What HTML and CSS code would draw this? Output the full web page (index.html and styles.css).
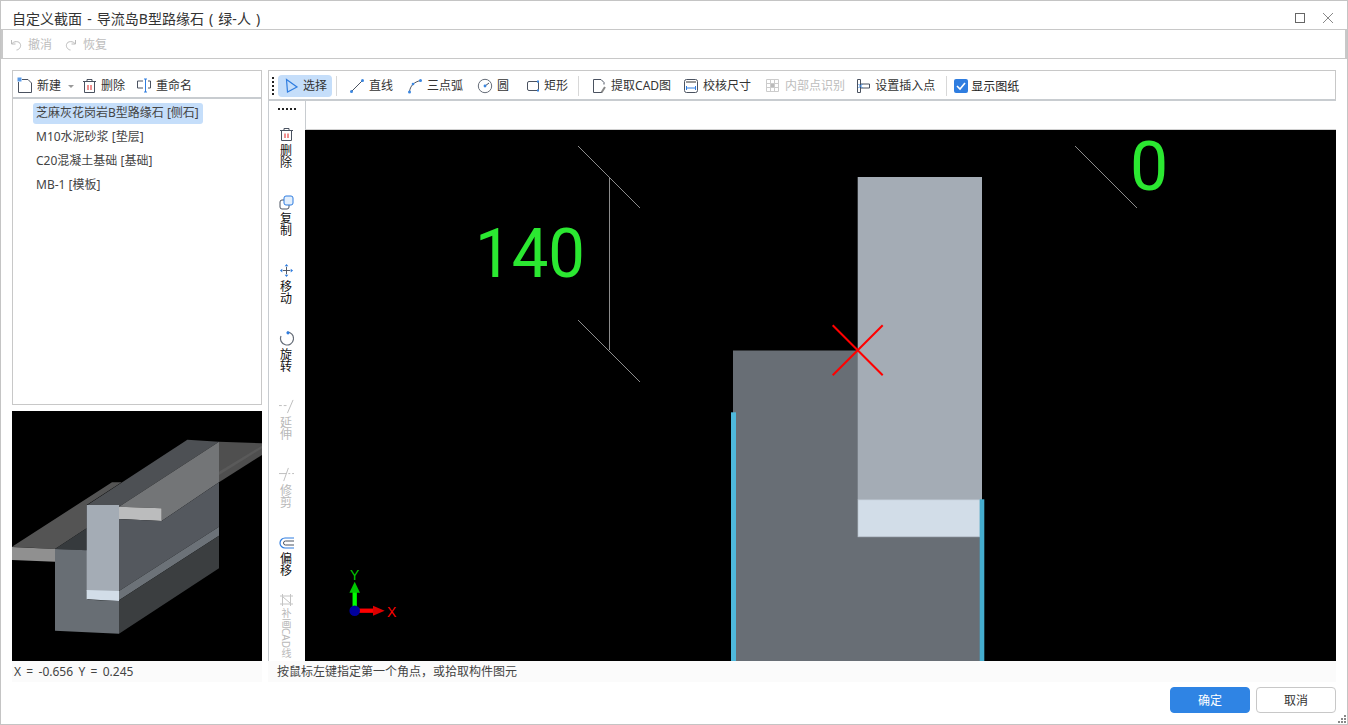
FILE: index.html
```html
<!DOCTYPE html>
<html lang="zh-CN">
<head>
<meta charset="utf-8">
<title>自定义截面</title>
<link rel="stylesheet" href="styles.css">
</head>
<body>
<div class="window">
  <header class="titlebar">
    <span class="title">自定义截面 - 导流岛B型路缘石 ( 绿-人 )</span>
    <div class="winbtns">
      <svg width="12" height="12" viewBox="0 0 12 12"><rect x="1.500" y="1.500" width="9" height="9" fill="none" stroke="#666"/></svg>
      <svg width="12" height="12" viewBox="0 0 12 12"><path d="M1 1l10 10M11 1L1 11" stroke="#888" fill="none"/></svg>
    </div>
  </header>
  <div class="undobar">
    <span class="tool off"><svg width="14" height="14" viewBox="0 0 14 14"><path d="M2.500 2v4h4M2.500 6c2-3 8-3.500 9 .5.700 3-2 5.500-4 5.500" fill="none" stroke="#bbb"/></svg>撤消</span>
    <span class="tool off"><svg width="14" height="14" viewBox="0 0 14 14"><path d="M11.500 2v4h-4M11.500 6c-2-3-8-3.500-9 .5-.7 3 2 5.500 4 5.500" fill="none" stroke="#bbb"/></svg>恢复</span>
  </div>
  <main class="main">
    <aside class="left">
      <section class="treepanel">
        <div class="treebar">
          <span class="tool"><svg width="16" height="17" viewBox="0 0 16 17"><path d="M5 2.500h6l3.500 3.500v9.500h-13V5" fill="none" stroke="#4a5260"/><rect x="0.500" y="0.500" width="4" height="4" fill="#5a9ae6"/></svg>新建</span>
          <i class="caret"></i>
          <span class="tool"><svg width="15" height="16" viewBox="0 0 15 16"><path d="M1 3.500h13M5 3V1.500h5V3M2.500 3.500v11h10v-11" fill="none" stroke="#4a5260"/><path d="M6 7v5M9 7v5" stroke="#e02020"/></svg>删除</span>
          <span class="tool"><svg width="16" height="15" viewBox="0 0 16 15"><path d="M7 3H1.500v7H7M12 3h2.500v7H12" fill="none" stroke="#4a5260"/><path d="M8 1h3M9.500 1v13M8 14h3" fill="none" stroke="#2f7de0"/></svg>重命名</span>
        </div>
        <ul class="tree">
          <li><span class="node sel">芝麻灰花岗岩B型路缘石 [侧石]</span></li>
          <li><span class="node">M10水泥砂浆 [垫层]</span></li>
          <li><span class="node">C20混凝土基础 [基础]</span></li>
          <li><span class="node">MB-1 [模板]</span></li>
        </ul>
      </section>
      <svg class="preview" width="250" height="250" viewBox="36 18 750 750">
        <rect x="36" y="18" width="750" height="750" fill="#000"/>
        <polygon points="36,425 336,232 365,232 260,300 260,370 165,432" fill="#545454"/>
        <polygon points="165,432 260,370 260,436" fill="#363a3d"/>
        <polygon points="262,300 562,104 657,110 357,305" fill="#4d5054"/>
        <polygon points="657,110 786,115 786,150 657,232" fill="#4f4f4f"/>
        <polygon points="657,200 786,122 786,130 657,210" fill="#5a5a5a"/>
        <polygon points="357,305 657,110 657,232 485,348 485,310" fill="#737577"/>
        <polygon points="357,305 485,310 485,348 357,342" fill="#bbbcbd"/>
        <polygon points="357,342 485,348 657,232 657,365 357,558" fill="#54585e"/>
        <polygon points="357,558 657,365 657,392 357,586" fill="#6c7278"/>
        <polygon points="357,586 657,392 657,490 357,686" fill="#3b3e40"/>
        <polygon points="165,432 262,436 262,584 357,588 357,686 165,677" fill="#686e74"/>
        <rect x="260" y="300" width="97" height="258" fill="#a4acb5"/>
        <polygon points="260,555 357,558 357,588 260,583" fill="#d2dde8"/>
        <polygon points="36,426 165,432 165,470 36,465" fill="#909090"/>
      </svg>
      <div class="coords">X = -0.656 Y = 0.245</div>
    </aside>
    <section class="work">
      <div class="topbar">
        <span class="grip"></span>
        <span class="tool btn active"><svg width="16" height="16" viewBox="0 0 16 16"><path d="M3.500 1.500L14 9 4.500 14z" fill="none" stroke="#2f7de0" stroke-width="1.200"/></svg>选择</span>
        <i class="sep"></i>
        <span class="tool btn"><svg width="16" height="16" viewBox="0 0 16 16"><path d="M2.500 13.500l11-11" stroke="#4a5260"/><circle cx="2.500" cy="13.500" r="1.500" fill="#3a86e0"/><circle cx="13.500" cy="2.500" r="1.500" fill="#3a86e0"/></svg>直线</span>
        <span class="tool btn"><svg width="16" height="16" viewBox="0 0 16 16"><path d="M2.500 14C3 8 7 4 13.500 2.500" fill="none" stroke="#4a5260"/><circle cx="2.500" cy="14" r="1.500" fill="#3a86e0"/><circle cx="6" cy="6" r="1.300" fill="#3a86e0"/><circle cx="13.500" cy="2.500" r="1.500" fill="#3a86e0"/></svg>三点弧</span>
        <span class="tool btn wide"><svg width="16" height="16" viewBox="0 0 16 16"><circle cx="8" cy="8" r="6.700" fill="none" stroke="#666d78"/><path d="M8 8l4-3" stroke="#4a5260"/><circle cx="8" cy="8" r="1.400" fill="#3a86e0"/></svg>圆</span>
        <span class="tool btn narrow"><svg width="14" height="14" viewBox="0 0 14 14"><rect x="1.500" y="2.500" width="11" height="9" rx="1.500" fill="none" stroke="#4a5260"/><rect x="11" y="1.500" width="2" height="2" fill="#3a86e0"/><rect x="11" y="10.500" width="2" height="2" fill="#3a86e0"/></svg>矩形</span>
        <i class="sep"></i>
        <span class="tool btn mid"><svg width="16" height="16" viewBox="0 0 16 16"><path d="M11 14.500H2.500v-13H10l3 3v2" fill="none" stroke="#4a5260"/><path d="M10.500 14.500L14 9" stroke="#888" stroke-width="2"/></svg>提取CAD图</span>
        <span class="tool btn"><svg width="16" height="16" viewBox="0 0 16 16"><rect x="1.500" y="1.500" width="13" height="13" rx="2" fill="none" stroke="#4a5260"/><path d="M3 4h10" stroke="#999" stroke-width="2"/><path d="M3 10h10M3.500 8v4M12.500 8v4" stroke="#2f7de0"/></svg>校核尺寸</span>
        <span class="tool btn off slim"><svg width="16" height="16" viewBox="0 0 16 16"><path d="M1.500 1.500h12v12h-12zM5.500 1.500v12M9.500 1.500v12M1.500 5.500h12M1.500 9.500h12" fill="none" stroke="#ccc"/><rect x="6" y="6" width="3" height="3" fill="#bbb"/></svg>内部点识别</span>
        <span class="tool btn"><svg width="15" height="16" viewBox="0 0 15 16"><path d="M1.500 1.500h3v13h-3zM4.500 6h9v4h-9" fill="none" stroke="#4a5260"/><path d="M2.500 6l4 4M6.500 6l-4 4" stroke="#3a86e0"/></svg>设置插入点</span>
        <i class="sep"></i>
        <label class="check"><svg width="14" height="14" viewBox="0 0 14 14"><rect width="14" height="14" rx="2" fill="#2f7de0"/><path d="M3 7l3 3 5-6" fill="none" stroke="#fff" stroke-width="1.600"/></svg>显示图纸</label>
      </div>
      <div class="stage">
        <nav class="sidebar">
          <span class="hgrip"></span>
          <div class="vtool"><svg width="15" height="15" viewBox="0 0 15 15"><path d="M1 3.500h13M5 3V1.500h5V3M2.500 3.500v10h10v-10" fill="none" stroke="#4a5260"/><path d="M6 6.500v4.500M9 6.500v4.500" stroke="#e02020"/></svg><b>删除</b></div>
          <div class="vtool"><svg width="15" height="15" viewBox="0 0 15 15"><rect x="1" y="5" width="9" height="9" rx="2" fill="#fff" stroke="#4a5260"/><rect x="5" y="1" width="9" height="9" rx="2" fill="#e3effc" stroke="#2f7de0"/></svg><b>复制</b></div>
          <div class="vtool"><svg width="15" height="15" viewBox="0 0 16 16"><path d="M8 4v8M4 8h8" stroke="#4a5260"/><path d="M8 1l2 2.500H6zM8 15l2-2.500H6zM1 8l2.500-2v4zM15 8l-2.500-2v4z" fill="#2f7de0"/></svg><b>移动</b></div>
          <div class="vtool"><svg width="15" height="15" viewBox="0 0 15 15"><path d="M8 1a6.500 6.500 0 1 1-6 4" fill="none" stroke="#666d78" stroke-width="1.200"/><circle cx="9" cy="1.800" r="1.600" fill="#2f7de0"/></svg><b>旋转</b></div>
          <div class="vtool off"><svg width="15" height="15" viewBox="0 0 16 16"><path d="M0 7h3M5 7h3M9 15L15 1" fill="none" stroke="#bbb"/></svg><b>延伸</b></div>
          <div class="vtool off"><svg width="15" height="15" viewBox="0 0 16 16"><path d="M0 7h8M10 7h2M14 7h2M5 15L10 1" fill="none" stroke="#bbb"/></svg><b>修剪</b></div>
          <div class="vtool offset"><svg width="15" height="13" viewBox="0 0 15 13"><path d="M15 1H6a5 5 0 0 0 0 10h9" fill="none" stroke="#2f7de0" stroke-width="1.200"/><path d="M15 4H6.500a2 2 0 0 0 0 4H15" fill="none" stroke="#4a5260"/></svg><b>偏移</b></div>
          <div class="vtool off last"><svg width="13" height="14" viewBox="0 0 13 14"><path d="M2.500 1v12M10.500 1v12M0 3h13M0 11h13M3 4l7 6" fill="none" stroke="#c4c4c4"/></svg><b>补画CAD线</b></div>
        </nav>
        <div class="canvaswrap">
          <div class="canvashead"></div>
          <svg class="canvas" width="1031" height="531" viewBox="0 0 1031 531">
            <rect width="1031" height="531" fill="#000"/>
            <rect x="428" y="220.500" width="248" height="310.500" fill="#686e75"/>
            <rect x="552.700" y="47" width="124.300" height="323" fill="#a4acb5"/>
            <rect x="553" y="369.800" width="122" height="37" fill="#d2dde8" stroke="#b8c2cc" stroke-width="0.700"/>
            <rect x="426" y="282.300" width="5" height="248.700" fill="#4fb9dc"/>
            <rect x="674.700" y="369.300" width="4.600" height="161.700" fill="#44adcf"/>
            <path d="M527.700 195.300l50 50M577.700 195.300l-50 50" stroke="#f00" stroke-width="2" fill="none"/>
            <path d="M273 16l62 62M770 16l62 62M304.500 47v173M273 190l62 62" stroke="#8c8c8c" fill="none"/>
            <text x="170" y="147" class="cadtext" textLength="110" lengthAdjust="spacingAndGlyphs">140</text>
            <text x="825" y="60" class="cadtext">0</text>
            <path d="M49.700 480v-20" stroke="#0f0" stroke-width="4.300"/>
            <path d="M49.700 451.700l5.300 11h-10.600z" fill="#00c800"/>
            <path d="M50 480.700h19" stroke="#f00" stroke-width="4.300"/>
            <path d="M68 475.700l11.700 5-11.700 5z" fill="#dc0000"/>
            <circle cx="49.700" cy="480.700" r="5.300" fill="#00009c"/>
            <text x="45" y="449.500" class="axisy">Y</text>
            <text x="82" y="487" class="axisx">X</text>
          </svg>
        </div>
      </div>
      <div class="status">按鼠标左键指定第一个角点，或拾取构件图元</div>
    </section>
  </main>
  <footer class="actions">
    <button class="primary">确定</button>
    <button class="secondary">取消</button>
    <svg class="resize" width="8" height="8" viewBox="0 0 8 8"><path d="M6 0h2v2H6zM3 3h2v2H3zM6 3h2v2H6zM0 6h2v2H0zM3 6h2v2H3zM6 6h2v2H6z" fill="#888"/></svg>
  </footer>
</div>
</body>
</html>
```
FILE: styles.css
```css
* { box-sizing: border-box; }
html, body { margin: 0; padding: 0; height: 725px; overflow: hidden; background: #fff; }
body { font-family: "Noto Sans", "Noto Sans CJK SC", sans-serif; font-size: 12px; color: #333; }
svg { display: block; flex: none; }
.window { width: 1348px; height: 725px; border: 1px solid #c4c4c4; display: flex; flex-direction: column; background: #fff; position: relative; }
.titlebar { height: 28px; display: flex; align-items: center; justify-content: space-between; padding: 6px 13px 0 11px; flex: none; }
.title { font-size: 14px; color: #333; white-space: pre; word-spacing: 1.500px; }
.winbtns { display: flex; gap: 16px; }
.undobar { height: 30px; flex: none; display: flex; align-items: center; gap: 12px; padding: 2px 0 0 6px; border: 1px solid #c8c8c8; border-width: 1px 2px 1px 2px; }
.tool { display: flex; align-items: center; gap: 5px; white-space: nowrap; line-height: 18px; }
.off { color: #bdbdbd; }
.main { flex: none; height: 623px; display: flex; padding: 11px 11px 0 11px; gap: 6px; }
.left { width: 250px; flex: none; display: flex; flex-direction: column; }
.treepanel { height: 335px; border: 1px solid #c8c8c8; flex: none; }
.treebar { height: 28px; display: flex; align-items: center; padding: 3px 0 0 4px; border-bottom: 2px solid #c8ccd0; }
.treebar .tool { gap: 4px; }
.treebar .tool:nth-of-type(2) { margin-left: 8px; }
.treebar .tool:nth-of-type(3) { margin-left: 11px; }
.caret { width: 0; height: 0; border: 3px solid transparent; border-top: 3px solid #999; border-bottom: 0; margin-left: 7px; margin-top: 2px; }
.tree { list-style: none; margin: 0; padding: 2px 0 0 20px; }
.tree li { height: 24px; display: flex; align-items: center; }
.node { padding: 0 4px 0 3px; height: 21px; line-height: 20px; border-radius: 3px; color: #444; white-space: nowrap; }
.node.sel { background: #c5defa; }
.preview { margin-top: 6px; }
.coords { height: 21px; line-height: 21px; padding-left: 2px; background: #fbfbfb; color: #444; word-spacing: 2.200px; }
.work { width: 1068px; flex: none; display: flex; flex-direction: column; }
.topbar { height: 31px; flex: none; display: flex; align-items: center; border: 1px solid #c8c8c8; border-bottom: 2px solid #c8ccd0; padding: 2px 0 0 3px; }
.grip { width: 2px; height: 18px; margin-right: 4px; background: repeating-linear-gradient(#222 0 2px, transparent 2px 4px); }
.btn { height: 22px; padding: 0 5px; border-radius: 4px; gap: 4px; margin-right: 4px; }
.btn.active { background: #c5defa; margin-right: 2px; }
.btn.mid { margin-right: 2px; }
.btn.slim { margin-right: 1px; }
.btn.wide { margin-right: 7px; }
.btn.narrow { margin-right: 3px; }
.sep { width: 1px; height: 20px; background: #d8d8d8; margin: 0 7px 0 2px; flex: none; }
.check { display: flex; align-items: center; gap: 3px; color: #222; }
.stage { flex: none; height: 560px; display: flex; }
.sidebar { width: 37px; flex: none; display: flex; flex-direction: column; align-items: center; border-left: 1px solid #c8ccd0; overflow: hidden; }
.hgrip { width: 18px; height: 2px; margin-top: 7px; background: repeating-linear-gradient(90deg, #222 0 2px, transparent 2px 4px); flex: none; }
.vtool { height: 68px; width: 100%; flex: none; display: flex; flex-direction: column; align-items: center; padding-top: 17px; padding-right: 2px; }
.vtool b { font-weight: 400; width: 12px; line-height: 12px; word-break: break-all; color: #111; text-align: center; display: block; margin-top: 3px; }
.vtool.off b { color: #b8b8b8; }
.vtool.offset { padding-top: 19px; }
.vtool.last { padding-top: 7px; }
.vtool.last b { writing-mode: vertical-rl; width: 12px; font-size: 10px; line-height: 12px; white-space: nowrap; word-break: normal; margin-top: 1px; }
.canvaswrap { flex: none; width: 1031px; display: flex; flex-direction: column; }
.canvashead { height: 29px; flex: none; background: #fff; border-bottom: 1px solid #d0d0d0; border-left: 1px solid #c8ccd0; }
.canvas { overflow: visible; }
.cadtext { fill: #2be831; font-family: Roboto, sans-serif; font-weight: 400; font-size: 68px; }
.axisy { fill: #00c800; font-family: "Liberation Sans", sans-serif; font-size: 14px; }
.axisx { fill: #f00; font-family: "Liberation Sans", sans-serif; font-size: 14px; }
.status { height: 21px; line-height: 21px; padding-left: 9px; background: #fbfbfb; color: #444; }
.actions { flex: 1; display: flex; justify-content: flex-end; gap: 6px; padding: 5px 11px 0 0; position: relative; }
button { width: 80px; height: 26px; border-radius: 4px; font: inherit; padding: 0; }
.primary { background: #2f84e4; border: 1px solid #2f84e4; color: #fff; }
.secondary { background: #fff; border: 1px solid #c8c8c8; color: #333; }
.resize { position: absolute; right: 1px; bottom: 1px; }
```
